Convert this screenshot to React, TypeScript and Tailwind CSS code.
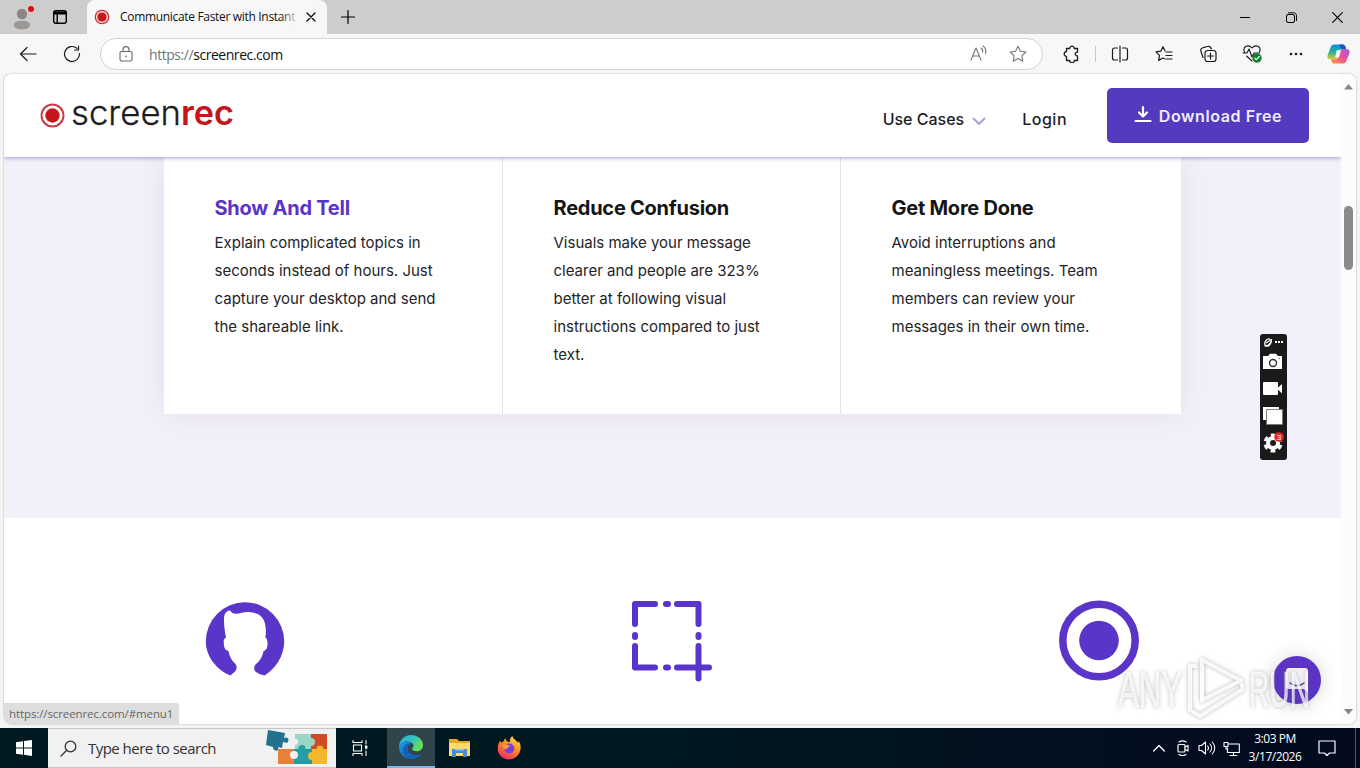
import type { ReactNode } from 'react';

interface IconProps {
  size?: number;
  box?: string;
  width?: number;
  className?: string;
  children: ReactNode;
}

// Stroke icon wrapper shared by the browser chrome and the system tray
function Icon({ size = 18, box = '0 0 18 18', width = 1.1, className = '', children }: IconProps) {
  return (
    <svg
      width={size}
      height={size}
      viewBox={box}
      fill="none"
      stroke="currentColor"
      strokeWidth={width}
      strokeLinecap="round"
      strokeLinejoin="round"
      className={`shrink-0 ${className}`}
    >
      {children}
    </svg>
  );
}

const features = [
  {
    title: 'Show And Tell',
    lines: ['Explain complicated topics in', 'seconds instead of hours. Just', 'capture your desktop and send', 'the shareable link.'],
    active: true,
  },
  {
    title: 'Reduce Confusion',
    lines: ['Visuals make your message', 'clearer and people are 323%', 'better at following visual', 'instructions compared to just', 'text.'],
    active: false,
  },
  {
    title: 'Get More Done',
    lines: ['Avoid interruptions and', 'meaningless meetings. Team', 'members can review your', 'messages in their own time.'],
    active: false,
  },
];

function TabStrip() {
  return (
    <div className="flex h-[34px] shrink-0 bg-[#cdcdcd]">
      <div className="flex w-[87px] items-center pl-[13px]">
        <svg width="24" height="28" viewBox="0 0 24 28">
          <circle cx="9" cy="11" r="5.2" fill="#8b8785" />
          <path d="M1 22c0-3 3.500-4.300 8-4.300s8 1.300 8 4.300-3.500 4.200-8 4.200-8-1.200-8-4.200Z" fill="#9b9795" />
          <circle cx="18" cy="6" r="4.500" fill="#e3c7c7" />
          <circle cx="18" cy="6" r="3" fill="#d3131b" />
        </svg>
        <Icon size={16} box="0 0 16 16" width={1.400} className="ml-[15px]">
          <rect x="1.700" y="1.700" width="12.600" height="12.600" rx="2.200" />
          <path d="M2 3.200h12M2 4.800h12M5.200 5v9" />
        </Icon>
      </div>
      <div className="relative flex w-[240px] items-center rounded-t-lg bg-[#f7f7f7] pl-[7px]">
        <svg width="16" height="16" viewBox="0 0 16 16">
          <circle cx="8" cy="8" r="6.700" fill="#f8dada" stroke="#cf3038" strokeWidth="1.300" />
          <circle cx="8" cy="8" r="4.600" fill="#c8131b" />
        </svg>
        <div className="relative ml-[10px] w-[180px] whitespace-nowrap font-['Open_Sans','Noto_Sans',sans-serif] text-[12px] tracking-[-0.32px] text-[#111]">
          Communicate Faster with Instant
          <div className="absolute inset-y-0 right-0 w-5 bg-linear-to-r from-transparent to-[#f7f7f7]" />
        </div>
        <Icon size={10} box="0 0 10 10" width={1.200} className="ml-[6px]">
          <path d="M1 1l8 8M9 1L1 9" />
        </Icon>
      </div>
      <div className="flex w-[42px] items-center justify-center">
        <Icon size={14} box="0 0 14 14" width={1.200}>
          <path d="M7 .5v13M.5 7h13" />
        </Icon>
      </div>
      <div className="ml-auto flex text-black">
        <div className="flex w-[46px] items-center justify-center">
          <Icon size={10} box="0 0 10 10" width={1}>
            <path d="M0 5.500h10" />
          </Icon>
        </div>
        <div className="flex w-[46px] items-center justify-center">
          <Icon size={11} box="0 0 11 11" width={1}>
            <rect x=".5" y="2.500" width="8" height="8" rx="1.500" />
            <path d="M2.500 .8h5.200c1.500 0 2.800 1.200 2.800 2.800v5" />
          </Icon>
        </div>
        <div className="flex w-[46px] items-center justify-center">
          <Icon size={11} box="0 0 11 11" width={1.100}>
            <path d="M.7.7l9.600 9.600M10.300.7L.7 10.300" />
          </Icon>
        </div>
      </div>
    </div>
  );
}

function Cell({ children }: { children: ReactNode }) {
  return <div className="flex w-11 shrink-0 items-center justify-center">{children}</div>;
}

function Toolbar() {
  return (
    <div className="flex h-[40px] shrink-0 bg-[#f7f7f7] pl-[6px] text-[#1b1b1b]">
      <Cell>
        <Icon width={1.200}>
          <path d="M17 9H1.500M8 2.500L1.500 9 8 15.500" />
        </Icon>
      </Cell>
      <Cell>
        <Icon width={1.200}>
          <path d="M16.500 8.500A7.500 7.500 0 1 1 14 3.400M15.500 1v4h-4" />
        </Icon>
      </Cell>
      <div className="mt-1 ml-[6px] flex h-8 w-[943px] items-center rounded-full border border-[#d3d3d3] bg-white pl-[16px]">
        <Icon className="text-[#666]">
          <rect x="3" y="6.500" width="12" height="9.500" rx="1.500" />
          <path d="M6 6.500V4.600a3 3 0 0 1 6 0v1.900" />
          <circle cx="9" cy="11.300" r=".9" fill="currentColor" stroke="none" />
        </Icon>
        <span className="ml-[14px] font-['Open_Sans','Noto_Sans',sans-serif] text-[14px] tracking-[-0.45px] text-[#111]">
          <span className="text-[#757575]">https://</span>screenrec.com
        </span>
        <div className="ml-auto flex w-[84px] text-[#777]">
          <Icon className="ml-[12px]">
            <path d="M1 15L6 3l5 12M2.800 11h6.400M11 3c1.500 1 2 2.500 1.500 4M13 1c2.500 1.800 3.500 4.500 2.500 7.500" />
          </Icon>
          <Icon className="ml-[21px]">
            <path d="M9 1.200l2.400 5 5.400.8-3.900 3.800.9 5.400L9 13.600l-4.800 2.600.9-5.400L1.200 7l5.400-.8Z" />
          </Icon>
        </div>
      </div>
      <div className="ml-[7px] flex">
        <Cell>
          <Icon width={1.300}>
            <path d="M3.500 3.500h3.200a2.300 2.300 0 0 1 4.600 0h3.200v3.700c-3-.5-3 4.100 0 3.600v4.700h-3.200a2.300 2.300 0 0 1-4.600 0H3.500v-4.200a2.300 2.300 0 0 1 0-4.600Z" />
          </Icon>
        </Cell>
        <div className="mr-[2px] ml-px my-auto h-4 w-px bg-[#c9c9c9]" />
        <Cell>
          <Icon width={1.200}>
            <path d="M9 1v16M6.500 3H3.500a2 2 0 0 0-2 2v8a2 2 0 0 0 2 2h3M11.500 3h3a2 2 0 0 1 2 2v8a2 2 0 0 1-2 2h-3" />
          </Icon>
        </Cell>
        <Cell>
          <Icon width={1.200}>
            <path d="M10 6L8 1.700 5.800 6.200 1 6.900l3.500 3.500-.9 5L8 13l1.500.8M11 7h6M11 10.500h6M11 14h6" />
          </Icon>
        </Cell>
        <Cell>
          <Icon width={1.200}>
            <path d="M4 12.500L2 6.500C1.300 4.500 2 3.300 4 2.700l4.500-1.200c2-.5 3.200.3 3.800 2.500" />
            <rect x="6" y="5.500" width="11" height="11" rx="2.500" />
            <path d="M11.500 8v6M8.500 11h6" />
          </Icon>
        </Cell>
        <Cell>
          <Icon size={20} box="0 0 20 20" width={1.100}>
            <path d="M3 9C-.5 3 6-.5 10 4c4-4.500 10.500-1 7 5M4.500 12l5.500 5M1 9h4l2-4 3 8 2-4h4" />
            <circle cx="15" cy="14" r="4.700" fill="#13812b" stroke="none" />
            <path d="M12.800 14.200l1.500 1.500 3-3.200" stroke="#fff" />
          </Icon>
        </Cell>
        <Cell>
          <svg width="14" height="4" viewBox="0 0 14 4" fill="currentColor">
            <circle cx="2" cy="2" r="1.300" />
            <circle cx="7" cy="2" r="1.300" />
            <circle cx="12" cy="2" r="1.300" />
          </svg>
        </Cell>
      </div>
      <div className="flex flex-1 items-center justify-center pr-px">
        <Copilot />
      </div>
    </div>
  );
}

function Copilot() {
  return (
    <svg width="23" height="22" viewBox="0 0 24 22">
      <defs>
        <linearGradient id="cpA" x1="0" y1="0" x2="0" y2="1">
          <stop offset="0" stopColor="#138bea" />
          <stop offset=".55" stopColor="#2fb58e" />
          <stop offset="1" stopColor="#f0c32c" />
        </linearGradient>
        <linearGradient id="cpB" x1="1" y1="0" x2="0" y2="1">
          <stop offset="0" stopColor="#a653e0" />
          <stop offset=".5" stopColor="#ee5590" />
          <stop offset="1" stopColor="#fb9a4a" />
        </linearGradient>
      </defs>
      <path d="M7.500 1h9c1.500 0 2.200 1 2.700 2.500L20 6h-4c-2 0-3 .8-3.600 2.700L10.500 14c-.6 2-1.600 2.500-3.500 2.500H3c-2.500 0-3-2-2.300-4.500L4 3.500C4.700 1.700 5.700 1 7.500 1Z" fill="url(#cpA)" />
      <path d="M13 1h3.500c1.500 0 2.200 1 2.700 2.500L20 6h-5Z" fill="#1d54be" />
      <path d="M16.500 21h-9C6 21 5.300 20 4.800 18.500L4 16.500h4c2 0 3-.8 3.600-2.700L13.500 8.500C14.100 6.500 15.100 6 17 6h4c2.500 0 3 2 2.300 4.500L20 18.500c-.7 1.800-1.700 2.500-3.500 2.500Z" fill="url(#cpB)" />
      <path d="M10.300 7h4.200l-2 7.500H8.500Z" fill="#fff" />
    </svg>
  );
}

function SiteHeader() {
  return (
    <header className="relative z-10 flex h-[83px] items-start bg-white pl-[36px] font-['Inter',sans-serif] text-[#1d1d1f] shadow-[0_1px_4px_rgba(84,58,190,0.5)]">
      <div className="mt-[17px] flex items-center">
        <svg width="25" height="25" viewBox="0 0 25 25" className="mt-[3px]">
          <circle cx="12.500" cy="12.500" r="11" fill="none" stroke="#c93840" strokeWidth="1.900" />
          <circle cx="12.500" cy="12.500" r="7.200" fill="#c4151d" />
        </svg>
        <svg width="166" height="46" viewBox="0 0 166 46" className="ml-[2px] overflow-visible">
          <text x="4" y="34" fontSize="34" fontWeight="300" fill="#1d1d1f" stroke="#1d1d1f" strokeWidth=".3" textLength="110" lengthAdjust="spacingAndGlyphs">screen</text>
          <text x="114" y="34" fontSize="34" fontWeight="600" fill="#c4151d" textLength="53" lengthAdjust="spacingAndGlyphs">rec</text>
        </svg>
      </div>
      <nav className="mt-[33px] mr-[40px] ml-auto flex text-[16px] leading-6 font-medium">
        <span className="tracking-[0px]">Use Cases</span>
        <Icon size={14} box="0 0 14 14" width={1.800} className="mt-[7px] ml-[8px] text-[#a99ae0]">
          <path d="M1.500 4.500L7 10l5.500-5.500" />
        </Icon>
        <span className="ml-[36px] tracking-[0.5px]">Login</span>
      </nav>
      <button className="mt-[14px] mr-[32px] flex h-[55px] w-[202px] items-center justify-center rounded-[5px] bg-[#543abf] text-[16px] font-semibold text-[#efecff]">
        <Icon size={18} box="0 0 18 18" width={2.200} className="mr-[7px] mb-[3px] text-white">
          <path d="M9 2v9M5 7.500L9 11.500l4-4M1.500 16h15" />
        </Icon>
        <span className="tracking-[0.6px]">Download Free</span>
      </button>
    </header>
  );
}

function FeatureCards() {
  return (
    <section className="h-[361px] bg-[#f3f0fa] pl-[160px]">
      <div className="grid h-[257px] w-[1017px] grid-cols-[339px_338px_340px] bg-white shadow-[0_0_28px_rgba(120,90,110,0.1)]">
        {features.map((f, i) => (
          <article key={f.title} className={`pt-[38px] pl-[50.500px] font-['Inter',sans-serif] ${i < 2 ? 'border-r border-[#e4e4e8]' : ''}`}>
            <h3 className={`text-[20px] leading-[27px] font-bold tracking-[-0.25px] ${f.active ? 'text-[#5b34c4]' : 'text-[#151517]'}`}>
              {f.title}
            </h3>
            <p className="mt-[7px] text-[15px] leading-[28px] whitespace-nowrap text-[#242427]">
              {f.lines.map((line) => (
                <span key={line} className="block">
                  {line}
                </span>
              ))}
            </p>
          </article>
        ))}
      </div>
    </section>
  );
}

function StepIcons() {
  return (
    <section className="ml-[27px] grid w-[1281px] grid-cols-3 justify-items-center pt-[82px] text-[#5b34c9]">
      <svg width="82" height="82" viewBox="0 0 82 82">
        <path
          d="M26.500 75.500C12 69.500 1.800 56 1.800 41.500a39.200 39.200 0 0 1 78.400 0c0 14.500-9 27.500-19.700 34C57 74.500 53.500 73.500 51.500 71.500c-2-2-1.700-5.500.5-7.500 3.500-2.500 6.500-7 7.500-13 3.500-1 4-4 4-8 0-3-.5-4.500-2.200-5.500 1-5 .7-12-1.300-17-3.500-7-9-8-15-8.500-6-.3-10 2.500-15 1.500-2.500-.5-3.500-3.500-5-3-3.500 1-5 4-5 9 0 6 .7 12 2 18-2 1-2.500 2.500-2.200 5.500.2 4.500 1 7 4.700 8 1 6 3.500 10 6.500 12.500 2 2 2.500 6-.5 8.500-1.500 1.200-3 2.500-4 3.500Z"
          fill="currentColor"
        />
      </svg>
      <svg width="82" height="82" viewBox="0 0 82 82" fill="none" stroke="currentColor" strokeWidth="6" strokeLinecap="round" strokeLinejoin="round">
        <path d="M24 4H4v20M46 4h21.500v20M4 46v21.500h20M46 67.500h32M67.500 46v32.500M35 4h2M35 67.500h2M4 35v2M67.500 35v2" />
      </svg>
      <svg width="82" height="82" viewBox="0 0 82 82">
        <circle cx="41" cy="40.500" r="36.200" fill="none" stroke="currentColor" strokeWidth="7.500" />
        <circle cx="41" cy="40.500" r="19.800" fill="currentColor" />
      </svg>
    </section>
  );
}

function RecorderWidget() {
  return (
    <div className="absolute top-[334px] left-[1260px] flex h-[126px] w-[27px] flex-col items-center rounded-[3px] bg-[#1a1a1c] text-white">
      <svg width="27" height="126" viewBox="0 0 27 126">
        <g stroke="#fff" fill="none" strokeWidth="1.200">
          <ellipse cx="8" cy="8.500" rx="2.800" ry="3.800" transform="rotate(30 8 8.500)" />
          <path d="M4.500 11.500c2 1.500 7.500-2 7-6.500M6 9l4-2.500" />
        </g>
        <g fill="#fff">
          <rect x="15" y="7" width="2" height="2" />
          <rect x="18" y="7" width="2" height="2" />
          <rect x="21" y="7" width="2" height="2" />
          <path d="M3 22h5l2-2.300h6l2 2.300h4v13H3Z" />
          <rect x="3" y="48" width="15" height="13" rx="1" />
          <path d="M17 54.500l5-4.500v9.500Z" />
          <path d="M3 73h16v13H3Z" />
        </g>
        <circle cx="13" cy="29" r="3.500" fill="#fff" stroke="#333" strokeWidth="1.400" />
        <circle cx="19.500" cy="24.500" r=".6" fill="#333" />
        <path d="M6.500 75.500h16v15h-16Z" fill="#fff" stroke="#777" strokeWidth=".9" />
        {/* six teeth, one every 60 degrees */}
        <circle cx="13" cy="109" r="5" fill="none" stroke="#fff" strokeWidth="4" />
        <circle cx="13" cy="109" r="7.800" fill="none" stroke="#fff" strokeWidth="3.500" strokeDasharray="4.500 3.668" strokeDashoffset="-1.800" />
        <circle cx="19" cy="103" r="4.800" fill="#e6272c" />
        <text x="19" y="106" textAnchor="middle" fontSize="8" fill="#fff" fontFamily="Liberation Sans, sans-serif">3</text>
      </svg>
    </div>
  );
}

function ChatButton() {
  return (
    <div className="absolute top-[656px] left-[1273px] flex size-12 items-center justify-center rounded-full bg-[#5b34c4] shadow-[0_1px_20px_rgba(0,0,0,0.16)]">
      <svg width="24" height="28" viewBox="0 0 24 28">
        <path d="M4 2h16a3 3 0 0 1 3 3v21l-5-3H4a3 3 0 0 1-3-3V5a3 3 0 0 1 3-3Z" fill="#f4f1fb" />
        <path d="M5 17c4 3.500 10 3.500 14 0" fill="none" stroke="#4e388f" strokeWidth="1.400" strokeLinecap="round" />
      </svg>
    </div>
  );
}

function Watermark() {
  return (
    <svg
      width="214"
      height="72"
      viewBox="0 0 214 72"
      className="absolute top-[652px] left-[1112px] overflow-visible [filter:drop-shadow(0_0_2px_rgba(90,90,90,0.5))]"
    >
      <g fill="#fff" fillOpacity=".72" stroke="#fff" strokeOpacity=".5" strokeWidth="1" fontFamily="Liberation Sans, sans-serif" fontSize="50">
        <text x="6" y="55" textLength="64" lengthAdjust="spacingAndGlyphs">ANY</text>
        <text x="137" y="55" textLength="61" lengthAdjust="spacingAndGlyphs">RUN</text>
      </g>
      <g fill="none" stroke="#fff" strokeOpacity=".85" strokeWidth="4" strokeLinejoin="round">
        <path d="M90 8v40l39-19.500Z" />
        <path d="M85 14h-7v44l10 6 43-27-2-6M90 20v30" />
      </g>
    </svg>
  );
}

function Scrollbar() {
  return (
    <div className="flex w-[15px] flex-col items-center bg-[#fcfcfc] pt-[10px]">
      <svg width="9" height="6" viewBox="0 0 9 6" fill="#858585">
        <path d="M4.500 0L9 5.500H0Z" />
      </svg>
      <div className="mt-[116px] h-[64px] w-[9px] rounded-full bg-[#8a8a8a]" />
      <svg width="9" height="6" viewBox="0 0 9 6" fill="#858585" className="mt-auto mb-[9px]">
        <path d="M4.500 5.500L9 0H0Z" />
      </svg>
    </div>
  );
}

function Puzzle() {
  return (
    <svg width="64" height="38" viewBox="0 0 64 38">
      <path d="M30 5h16v15H30Z" fill="#9bd5c6" />
      <path d="M46 5h16v15H46Z" fill="#d04a25" />
      <path d="M13 20h16v15H13Z" fill="#e8803a" />
      <path d="M29 20h18v15H29Z" fill="#259da4" />
      <path d="M47 20h15v15H47Z" fill="#f4b82c" />
      <circle cx="46" cy="13" r="4" fill="#9bd5c6" />
      <circle cx="37" cy="19.500" r="3.500" fill="#259da4" />
      <circle cx="29" cy="26" r="4" fill="#f1f1f1" />
      <circle cx="47" cy="27" r="4" fill="#f4b82c" />
      <circle cx="55" cy="20" r="3.500" fill="#f4b82c" />
      <path d="M30 10c4-1 4 6 0 6Z" fill="#f1f1f1" />
      <path d="M3 1l17 3-1 5c4-2 6 2 3 5l-4-1-1 6-4-1c2 5-5 5-5 0l-7-2Z" fill="#21718f" />
    </svg>
  );
}

function EdgeLogo() {
  return (
    <svg width="26" height="26" viewBox="0 0 26 26">
      <defs>
        <linearGradient id="edTop" x1="0" y1="0" x2="1" y2=".4">
          <stop offset="0" stopColor="#2aa9df" />
          <stop offset=".6" stopColor="#36c6bd" />
          <stop offset="1" stopColor="#66dd55" />
        </linearGradient>
        <linearGradient id="edLow" x1="0" y1="0" x2="1" y2="1">
          <stop offset="0" stopColor="#1b9de2" />
          <stop offset="1" stopColor="#1150a6" />
        </linearGradient>
      </defs>
      <path d="M1 13C1 6 6.500 1 13 1s12 4.500 12 10c0 4-3 6.300-6.500 6.300-3 0-4.500-1.300-4.500-2.300s1.500-1.300 1.500-3.500S13 7.500 9.500 7.500C5 7.500 1.500 10 1 13Z" fill="url(#edTop)" />
      <path d="M1 13c0-3.500 4-5.500 8.500-5.500 2 0 3.500.5 4.500 1.500-3 .5-4.500 3-4.500 5.500 0 4.500 4 7 8 7 2.500 0 4-.7 5.500-1.500C21 23.300 17.500 25 13 25 6 25 1 19.500 1 13Z" fill="url(#edLow)" />
      <path d="M9.500 14.500c0-2.200 1-4 3-5-4-1-7.500 2.500-7.500 7 0 4 3 7.800 8 8.500 4.500 0 8-1.700 10-5-6 3-13.500 0-13.500-5.500Z" fill="#1661b8" />
    </svg>
  );
}

function FirefoxLogo() {
  return (
    <svg width="24" height="24" viewBox="0 0 24 24">
      <defs>
        <linearGradient id="ffx" x1=".8" y1="0" x2=".3" y2="1">
          <stop offset="0" stopColor="#ffe44a" />
          <stop offset=".45" stopColor="#ff8f25" />
          <stop offset="1" stopColor="#f02b62" />
        </linearGradient>
      </defs>
      <path d="M3 5l1.500 2C5 6 6 5.500 7 5l1-3 2 3.500 3 .5c-.5-3 1-5 2.500-6 .2 3 4 4 5.500 7l.7-2C23.300 7.500 24 10 23.500 13c-.8 6-5.500 10.500-11.500 10.500S.7 18.800.7 13C.7 9.500 1.500 7 3 5Z" fill="url(#ffx)" />
      <circle cx="12.300" cy="12.500" r="5" fill="#7941d8" />
      <path d="M6 9c2.500-1.500 4-.5 5.500.5l2 .3c-1 1.500-3 1-3 2.700-1 1-2.500 1-3 0C6.500 11.500 5.500 10.500 6 9Z" fill="#ffa22d" />
    </svg>
  );
}

function Taskbar() {
  return (
    <footer className="flex h-10 shrink-0 bg-linear-to-r from-[#001a22] via-[#001720] to-[#030a1e] font-['Open_Sans','Noto_Sans',sans-serif] text-white">
      <div className="flex w-12 items-center justify-center">
        <svg width="16" height="16" viewBox="0 0 16 16" fill="#fff">
          <path d="M0 2.300l7-1v6.200H0ZM8 1.100L16 0v7.500H8ZM0 8.500h7v6.200l-7-1ZM8 8.500h8V16l-8-1.200Z" />
        </svg>
      </div>
      <div className="flex w-72 items-center border-y border-[#c5c5c5] bg-[#f1f1f1] pl-[12px] text-[#333]">
        <Icon size={17} box="0 0 17 17" width={1.300}>
          <circle cx="10.500" cy="6.500" r="5.300" />
          <path d="M6.700 10.300L1 16" />
        </Icon>
        <span className="ml-[11px] text-[15px] tracking-[-0.53px] whitespace-nowrap">Type here to search</span>
        <div className="mr-[7px] ml-auto">
          <Puzzle />
        </div>
      </div>
      <div className="flex w-[51px] items-center justify-center">
        <Icon size={18} box="0 0 18 18" width={1.100} className="mr-[3px]">
          <path d="M2 1.500v2h9v-2M2 16.500v-2h9v2M2.500 6h8v6h-8ZM15 1.500v3M15 12v4.500M15 6v4" />
          <rect x="14" y="7" width="2.500" height="2.500" fill="#fff" stroke="none" />
        </Icon>
      </div>
      <div className="flex w-12 items-center justify-center border-b-2 border-[#76b9ed] bg-[#30444b]">
        <EdgeLogo />
      </div>
      <div className="flex w-[49px] items-center justify-center">
        <svg width="23" height="20" viewBox="0 0 23 20">
          <path d="M1 1h8l2 2h11v5H1Z" fill="#e8a920" />
          <path d="M1 5h21v13H1Z" fill="#ffd96b" />
          <path d="M4 19v-8h15v8h-4v-4H8v4Z" fill="#3f91ce" />
          <path d="M7 11h9v1.500H7Z" fill="#8cc3e8" />
        </svg>
      </div>
      <div className="flex w-[49px] items-center justify-center">
        <FirefoxLogo />
      </div>
      <div className="ml-auto flex items-center">
        <Icon size={12} box="0 0 12 12" width={1.300}>
          <path d="M.7 9L6 3.500 11.300 9" />
        </Icon>
        <Icon size={16} box="0 0 16 16" width={1.200} className="ml-[10px]">
          <rect x="3" y="4.500" width="7" height="7.500" rx="1" />
          <path d="M10 7l3-1.500v5.500l-3-1.500M4 2c2-1.300 5-1.300 7 0M4 14.500c2 1.300 5 1.300 7 0" />
        </Icon>
        <Icon size={18} box="0 0 18 18" width={1.100} className="ml-[7px]">
          <path d="M1 6.500h2.500l4-3.500v12l-4-3.500H1ZM9.700 7c1 1.200 1 2.800 0 4M12 5c2 2.300 2 5.700 0 8M14.300 3c3.200 3.500 3.200 8.500 0 12" />
        </Icon>
        <Icon size={17} box="0 0 17 17" width={1.100} className="ml-[7px]">
          <path d="M6 4h10.300v8.500H4.500V8M10.500 12.500v3M7 15.500h7M1 2.500h4v4H1ZM3 6.500V9h1.500" />
        </Icon>
        <div className="ml-[4px] w-[62px] text-center text-[12px] leading-[18px] tracking-[-0.45px] whitespace-nowrap">
          <div>3:03 PM</div>
          <div>3/17/2026</div>
        </div>
        <Icon size={18} box="0 0 18 18" width={1.200} className="ml-[12px]">
          <path d="M1 2h16v12h-5.500L9 16.500 6.500 14H1Z" />
        </Icon>
        <div className="ml-[19px] h-10 w-px bg-[#4b5462]" />
        <div className="w-[4px]" />
      </div>
    </footer>
  );
}

export default function App() {
  return (
    <div className="relative flex h-[768px] w-[1360px] flex-col overflow-hidden bg-[#f5f5f5]">
      <TabStrip />
      <Toolbar />
      <main className="mx-[4px] mb-[4px] flex h-[650px] shrink-0 overflow-hidden rounded-lg bg-white shadow-[0_0_2px_rgba(0,0,0,0.35)]">
        <div className="w-[1337px] overflow-hidden">
          <SiteHeader />
          <FeatureCards />
          <StepIcons />
        </div>
        <Scrollbar />
      </main>
      <Taskbar />
      <RecorderWidget />
      <ChatButton />
      <Watermark />
      <div className="absolute top-[703px] left-[4px] flex h-[21px] w-[175px] items-center rounded-tr-[3px] rounded-bl-lg bg-[#dedede] pl-[5px] font-['Open_Sans','Noto_Sans',sans-serif] text-[11.500px] tracking-[-0.1px] text-[#666]">
        https://screenrec.com/#menu1
      </div>
    </div>
  );
}
